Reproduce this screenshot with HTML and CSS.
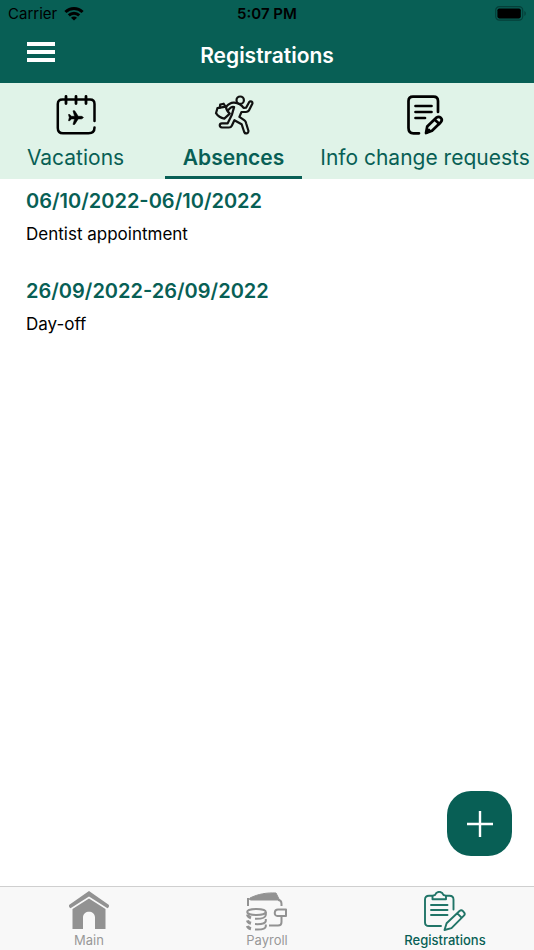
FILE: index.html
```html
<!DOCTYPE html>
<html lang="en">
<head>
    <meta charset="UTF-8">
    <meta name="viewport" content="width=device-width, initial-scale=1.0">
    <title>Registrations</title>
    <link rel="stylesheet" href="styles.css">
</head>
<body>
    <header>
        <div class="status-bar">
            <div class="carrier">
                <span>Carrier</span>
                <svg width="20" height="15" viewBox="0 0 20 15" fill="none" stroke="#000" stroke-width="3">
                    <path d="M1.4 6 C6.3 1.2 13.7 1.2 18.6 6"/>
                    <path d="M4.8 9.4 C7.8 6.6 12.2 6.6 15.2 9.4"/>
                    <path d="M10 14.6 L7 11.7 C8.7 10.2 11.3 10.2 13 11.7 Z" fill="#000" stroke="none"/>
                </svg>
            </div>
            <time class="clock">5:07 PM</time>
            <svg class="battery" width="31" height="15" viewBox="0 0 31 15">
                <rect x="0.7" y="0.7" width="27" height="13.4" rx="3.6" fill="none" stroke="#053f39" stroke-width="1.2"/>
                <rect x="2.4" y="2.4" width="23.4" height="10" rx="1.8"/>
                <path d="M29.4 5 C31.2 5.8 31.2 9 29.4 9.8 Z" fill="#053f39"/>
            </svg>
        </div>
        <div class="title-bar">
            <button class="menu" aria-label="Menu">
                <svg width="28" height="20" viewBox="0 0 28 20" fill="#fff">
                    <rect width="28" height="4"/>
                    <rect y="8" width="28" height="4"/>
                    <rect y="16" width="28" height="4"/>
                </svg>
            </button>
            <h1>Registrations</h1>
        </div>
    </header>
    <nav class="tabs">
        <button class="tab">
            <svg width="40" height="40" viewBox="0 0 40 40" fill="none" stroke="#000" stroke-width="2.5" stroke-linecap="round">
                <path d="M38.5 26 V9 Q38.5 4.5 34 4.5 H6.5 Q1.8 4.5 1.8 9 V33 Q1.8 38.3 7 38.3 H32.5 Q38.5 38.3 38.5 32.5"/>
                <path d="M10 1.5 V8.5 M20 1.5 V8.5 M30 1.5 V8.5" stroke-width="2.8"/>
                <path d="M27 22.6 C27 21.7 26 21.3 25 21.3 H22.2 L18.7 15.8 H17 L18.6 21.3 H15.4 L13.8 19.5 H12.5 L13.3 22.6 L12.5 25.7 H13.8 L15.4 23.9 H18.6 L17 29.4 H18.7 L22.2 23.9 H25 C26 23.9 27 23.5 27 22.6 Z" fill="#000" stroke-width="0.6"/>
            </svg>
            <span class="label">Vacations</span>
        </button>
        <button class="tab active">
            <svg width="40" height="40" viewBox="0 0 40 40" fill="none" stroke="#111" stroke-width="2.2" stroke-linecap="round" stroke-linejoin="round">
                <circle cx="26.2" cy="5.2" r="3.7"/>
                <path d="M12.2 11.8 C15 8.5 17 7.3 20.3 7.7 C24.5 8.2 27.5 9.8 29.6 12.9 L32.2 12.6 L35.1 7.2 C36.4 5.3 39.2 6.8 38.2 9 L34.8 15.7 C34.1 16.7 33.3 17 32 17 L27.5 17 L25.4 21.9 L30.5 25.4 C31.5 26.1 31.9 27 32.1 28.2 L34.4 35.7 C34.8 38.6 31.2 39.5 30.2 37 L27.6 29.2 L20.4 25.2 L17.8 30.7 C17.2 32 16.3 32.5 14.9 32.5 H8 C5 32.3 5 28.4 8 28.3 H13.7 L18 19.4 L20.1 12.1 C18.2 11.6 17.2 12 16 13.2 L13.8 15.5"/>
                <path d="M3.4 13.2 L11.8 11.7 C12.4 15.2 14 17.2 15.8 18.6 L10.3 23.6 C7.5 23.2 4.1 21.5 2 18.2 Z"/>
                <path d="M5.8 12.6 L6.2 9.6 L9.7 8.7 L11.4 11.5"/>
            </svg>
            <span class="label">Absences</span>
        </button>
        <button class="tab">
            <svg width="40" height="40" viewBox="0 0 40 40" fill="none" stroke="#000" stroke-width="2.7" stroke-linecap="round" stroke-linejoin="round">
                <path d="M33 17 V6 Q33 1.7 28.5 1.7 H8 Q3.5 1.7 3.5 6 V33 Q3.5 38.3 8.5 38.3 H14"/>
                <path d="M10.5 11 H26.5 M10.5 17 H26.5 M10.5 23 H20"/>
                <path d="M21 38 L22.2 31.5 L31.5 22.6 C34.4 20.4 38.4 24 36 27 L27 35.7 Z"/>
                <path d="M29.8 24.8 L34.2 28.8 M21.5 37.5 L24 35"/>
            </svg>
            <span class="label">Info change requests</span>
        </button>
    </nav>
    <main>
        <article class="entry">
            <h2>06/10/2022-06/10/2022</h2>
            <p>Dentist appointment</p>
        </article>
        <article class="entry">
            <h2>26/09/2022-26/09/2022</h2>
            <p>Day-off</p>
        </article>
    </main>
    <button class="add" aria-label="Add absence">
        <svg width="26" height="26" viewBox="0 0 26 26" stroke="#fff" stroke-width="2.4">
            <path d="M13 0 V26 M0 13 H26"/>
        </svg>
    </button>
    <footer>
        <a class="nav-item" href="#main">
            <svg width="42" height="40" viewBox="0 0 42 40" fill="#929292">
                <path d="M21 0 L41 14 Q41.5 16.8 39.5 17.3 L21 5.5 L2.5 17.3 Q0.5 16.8 1 14 Z"/>
                <path d="M21 7.5 L37.5 18 V38 H27 V26.5 C27 18.8 15 18.8 15 26.5 V38 H4.5 V18 Z"/>
            </svg>
            <span>Main</span>
        </a>
        <a class="nav-item" href="#payroll">
            <svg width="42" height="40" viewBox="0 0 42 40" fill="none" stroke="#929292" stroke-width="2" stroke-linejoin="round">
                <path d="M4 7 C12 3 21 1.5 30 2 L33.5 9 H5 Q2.5 9 4 7 Z" fill="#929292" stroke-width="1"/>
                <path d="M2 7 V15 M32 9 Q35.5 9 35.5 13 V15"/>
                <path d="M32 18.5 H40 V25 H31.5 C27.5 25 28 18.5 32 18.5 Z"/>
                <path d="M35.5 25 V31 Q35.5 34.5 32 34.5 H23"/>
                <ellipse cx="10.5" cy="21" rx="9.3" ry="3"/>
                <path d="M19.8 21 V24 C19.5 26.8 15 28 9 27.8 M19.8 28 V30 C19.5 32.3 15 33.4 9 33.1 M19.8 33.5 V35.3 C19.5 37.8 15 38.8 9 38.4"/>
                <path d="M1.5 23.5 Q2 26 5 26.9 M1.5 29.3 Q2 31.5 5 32.3 M1.5 34.8 Q2 37 5 37.7" stroke-width="3"/>
            </svg>
            <span>Payroll</span>
        </a>
        <a class="nav-item active" href="#registrations">
            <svg width="42" height="40" viewBox="0 0 42 40" fill="none" stroke="#217568" stroke-width="1.9" stroke-linecap="round" stroke-linejoin="round">
                <path d="M8.5 4.7 H5 Q1 4.7 1 8.5 V31.5 Q1 35 5 35 H17 M22 4.7 H25.5 Q29.5 4.7 29.5 8.5 V18.5"/>
                <path d="M8.5 8.3 V5.5 Q8.5 4.5 11 4 C12.5 -0.2 18 -0.2 19.5 4 Q22 4.5 22 5.5 V8.3 Z"/>
                <path d="M7 14 H23.5 M7 19 H23.5 M7 24 H23.5"/>
                <path d="M20.5 39 L22.6 32.3 L35.5 20 Q37.3 18.6 39 20.1 L40 21.4 Q41.5 23 39.9 24.6 L27.5 37.2 Z M33.3 22.4 L37.7 26.7"/>
            </svg>
            <span>Registrations</span>
        </a>
    </footer>
</body>
</html>
```

FILE: styles.css
```css
* {
    margin: 0;
    padding: 0;
    box-sizing: border-box;
}
body {
    display: flex;
    flex-direction: column;
    min-height: 100vh;
    font-family: Inter, 'Liberation Sans', sans-serif;
    color: #000;
    background-color: #fff;
}
button {
    border: none;
    background: none;
    font-family: inherit;
    cursor: pointer;
}
svg {
    display: block;
    flex: none;
}
header {
    background-color: #085f55;
}
.status-bar {
    display: grid;
    grid-template-columns: 1fr auto 1fr;
    align-items: center;
    height: 27px;
    padding: 0 8px;
    font-size: 15px;
}
.carrier {
    display: flex;
    align-items: center;
    gap: 7px;
}
.clock {
    font-weight: 600;
}
.battery {
    justify-self: end;
}
.title-bar {
    display: grid;
    grid-template-columns: 1fr auto 1fr;
    align-items: center;
    height: 56px;
    padding: 0 27px;
}
.menu {
    justify-self: start;
    padding-bottom: 6px;
}
h1 {
    font-size: 21px;
    font-weight: 600;
    color: #fff;
}
.tabs {
    display: grid;
    grid-template-columns: minmax(0, 151fr) minmax(0, 165fr) minmax(0, 218fr);
    height: 96px;
    background-color: #e0f3e8;
}
.tab {
    display: flex;
    flex-direction: column;
    align-items: center;
    justify-content: space-between;
    padding-top: 12px;
    font-size: 21px;
    color: #085f55;
    white-space: nowrap;
}
.label {
    line-height: 36px;
    border-bottom: 3px solid transparent;
}
.tab.active .label {
    padding: 0 18px;
    font-weight: 600;
    border-color: #085f55;
}
main {
    flex: 1;
    padding: 8px 26px;
}
.entry {
    margin-bottom: 32px;
}
h2 {
    margin-bottom: 8px;
    font-size: 20px;
    font-weight: 600;
    line-height: 28px;
    color: #085f55;
}
p {
    font-size: 17px;
    line-height: 22px;
}
.add {
    display: flex;
    align-items: center;
    justify-content: center;
    align-self: flex-end;
    width: 65px;
    height: 65px;
    margin: 0 22px 30px 0;
    border-radius: 24px;
    background-color: #085f55;
}
footer {
    display: grid;
    grid-template-columns: repeat(3, 1fr);
    border-top: 1px solid #cfcfcf;
    background-color: #f8f8f8;
}
.nav-item {
    display: flex;
    flex-direction: column;
    align-items: center;
    padding-top: 4px;
    font-size: 13px;
    line-height: 19px;
    color: #989898;
    text-decoration: none;
}
.nav-item.active {
    font-weight: 500;
    color: #085f55;
}
```
